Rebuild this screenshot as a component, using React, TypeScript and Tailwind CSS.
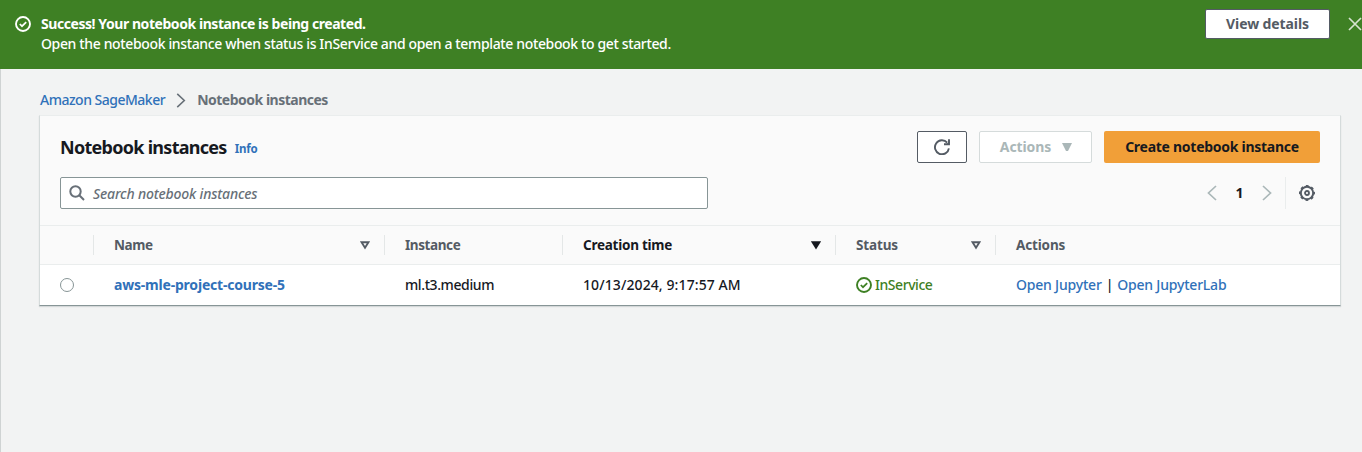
import type { ReactNode } from "react";

function CheckCircle({ className }: { className: string }) {
  return (
    <svg viewBox="0 0 16 16" className={className} fill="none" stroke="currentColor" strokeWidth="1.9">
      <circle cx="8" cy="8" r="7" />
      <path d="M4.8 8l2.2 2.2 4.2-4.1" strokeWidth="1.7" />
    </svg>
  );
}

function Chevron({ className, left }: { className: string; left?: boolean }) {
  return (
    <svg viewBox="0 0 10 16" className={className} fill="none" stroke="currentColor" strokeWidth="1.7">
      <path d={left ? "M9 1L1.5 8L9 15" : "M1 1L8.5 8L1 15"} />
    </svg>
  );
}

function Sort({ filled }: { filled?: boolean }) {
  return (
    <svg viewBox="0 0 10 9" className="h-[9px] w-[10px]" fill={filled ? "currentColor" : "none"} stroke="currentColor" strokeWidth="1.9" strokeLinejoin="miter">
      <path d="M1.5 1.2H8.5L5 6.8Z" />
    </svg>
  );
}

function HeadCell({ className, children, sort }: { className: string; children?: ReactNode; sort?: "open" | "filled" }) {
  return (
    <div className={`flex h-5 items-center justify-between pl-5 pr-[14px] text-[13.5px] font-bold ${className}`}>
      <span>{children}</span>
      {sort && <Sort filled={sort === "filled"} />}
    </div>
  );
}

const grid = "grid grid-cols-[53px_291px_178px_273px_160px_1fr] items-center";

export default function App() {
  return (
    <div className="flex h-[452px] w-[1362px] flex-col overflow-hidden bg-[#f2f3f3] font-['Noto_Sans','Open_Sans',sans-serif] text-[14px] font-medium leading-5 text-[#16191f]">
      <header className="flex h-[69px] shrink-0 items-start bg-[#3e8024] pl-[15px] text-white">
        <CheckCircle className="mt-4 h-4 w-4 shrink-0" />
        <div className="ml-[10px] mt-[14px] flex-1 whitespace-nowrap">
          <p className="font-bold tracking-[-0.44px]">Success! Your notebook instance is being created.</p>
          <p className="tracking-[-0.36px]">Open the notebook instance when status is InService and open a template notebook to get started.</p>
        </div>
        <button className="mt-[9px] h-[30px] w-[125px] shrink-0 rounded-[2px] border border-[#545b64] bg-white font-bold leading-none tracking-[-0.1px] text-[#545b64]">View details</button>
        <svg viewBox="0 0 14 14" className="ml-[18px] mt-[17px] h-[14px] w-[14px] shrink-0" stroke="#d5e3cf" strokeWidth="1.7">
          <path d="M1 1L13 13M13 1L1 13" />
        </svg>
      </header>
      <main className="flex-1 border-l border-[#cfd3d3] pl-[38px] pr-[21px] pt-[21px]">
        <nav className="ml-px flex h-5 items-center whitespace-nowrap">
          <a className="tracking-[-0.5px] text-[#3071b9]">Amazon SageMaker</a>
          <Chevron className="ml-[11px] mr-[11px] h-[15px] w-[10px] text-[#687078]" />
          <span className="font-bold tracking-[-0.5px] text-[#687078]">Notebook instances</span>
        </nav>
        <section className="mt-[5px] h-[191px] w-[1302px] border border-[#d5dbdb] border-b-[#879596] border-t-[#eaeded] bg-[#fafafa] shadow-[0_1px_1px_0_rgba(0,28,36,0.12)]">
          <div className="flex h-[109px] flex-col pl-5 pr-5 pt-[15px]">
            <div className="flex h-8 items-center whitespace-nowrap">
              <h1 className="-mt-px text-[18px] font-bold tracking-[-0.72px]">Notebook instances</h1>
              <a className="ml-2 mt-1 text-[11.5px] font-bold tracking-[-0.2px] text-[#3071b9]">Info</a>
              <button className="ml-auto flex h-8 w-[50px] items-center justify-center rounded-[2px] border border-[#545b64] bg-white text-[#545b64]">
                <svg viewBox="0 0 16 16" className="h-4 w-4" fill="none" stroke="currentColor" strokeWidth="1.9">
                  <path d="M14.9 9.3A7 7 0 1 1 13.2 3.6" />
                  <path d="M10 5.2H15V0.3" />
                  <path d="M12.4 5.6L15.5 2.2V5.6Z" fill="currentColor" stroke="none" />
                </svg>
              </button>
              <button className="ml-3 flex h-8 w-[113px] items-center justify-center rounded-[2px] border border-[#d5dbdb] bg-white pl-px font-bold tracking-[-0.1px] text-[#aab7b8]">
                Actions
                <svg viewBox="0 0 10 8" className="ml-[11px] h-2 w-[10px]" fill="currentColor"><path d="M0 0H10L6 8H4Z" /></svg>
              </button>
              <button className="ml-3 h-8 w-[216px] rounded-[2px] bg-[#f19f38] font-bold tracking-[-0.27px]">Create notebook instance</button>
            </div>
            <div className="mt-[14px] flex h-8 items-center">
              <div className="flex h-8 w-[648px] items-center rounded-[2px] border border-[#879596] bg-white pl-2 text-[#687078]">
                <svg viewBox="0 0 16 16" className="h-4 w-4" fill="none" stroke="currentColor" strokeWidth="2">
                  <circle cx="6.5" cy="6.5" r="5.2" /><path d="M10.3 10.3L15 15" />
                </svg>
                <span className="ml-2 mt-0.5 italic tracking-[-0.18px]">Search notebook instances</span>
              </div>
              <Chevron left className="ml-auto h-4 w-[10px] text-[#aab7b8]" />
              <span className="w-[45px] text-center font-bold">1</span>
              <Chevron className="h-4 w-[10px] text-[#aab7b8]" />
              <span className="ml-[13px] h-8 w-px bg-[#eaeded]" />
              <svg viewBox="0 0 16 16" className="ml-[13px] mr-[5px] h-4 w-4 text-[#545b64]" fill="none" stroke="currentColor" strokeWidth="2">
                <circle cx="8" cy="8" r="6.2" />
                <circle cx="8" cy="8" r="7.2" strokeWidth="1.6" strokeDasharray="2.8 2.855" strokeDashoffset="1.4" />
                <circle cx="8" cy="8" r="2" strokeWidth="1.8" />
              </svg>
            </div>
          </div>
          <div className={`${grid} h-10 border-y border-[#eaeded] text-[#545b64]`}>
            <HeadCell className="" />
            <HeadCell className="border-l border-[#e4e7e7] tracking-[-0.4px]" sort="open">Name</HeadCell>
            <HeadCell className="border-l border-[#e4e7e7] tracking-[-0.4px]">Instance</HeadCell>
            <HeadCell className="border-l border-[#e4e7e7] tracking-[-0.25px] text-[#16191f]" sort="filled">Creation time</HeadCell>
            <HeadCell className="border-l border-[#e4e7e7] tracking-[-0.15px]" sort="open">Status</HeadCell>
            <HeadCell className="border-l border-[#e4e7e7] tracking-[-0.15px]">Actions</HeadCell>
          </div>
          <div className={`${grid} h-10 whitespace-nowrap bg-white`}>
            <span className="ml-5 h-[14px] w-[14px] rounded-full border border-[#879596]" />
            <a className="pl-[21px] font-bold tracking-[-0.2px] text-[#3071b9]">aws-mle-project-course-5</a>
            <span className="pl-[21px] tracking-[-0.4px]">ml.t3.medium</span>
            <span className="pl-[21px] tracking-[0.1px]">10/13/2024, 9:17:57 AM</span>
            <span className="flex items-center gap-[3px] pl-[21px] tracking-[-0.45px] text-[#3e8024]"><CheckCircle className="h-4 w-4" />InService</span>
            <span className="flex gap-1 pl-[21px] tracking-[-0.2px]"><a className="text-[#3071b9]">Open Jupyter</a><span>|</span><a className="text-[#3071b9]">Open JupyterLab</a></span>
          </div>
        </section>
      </main>
    </div>
  );
}
